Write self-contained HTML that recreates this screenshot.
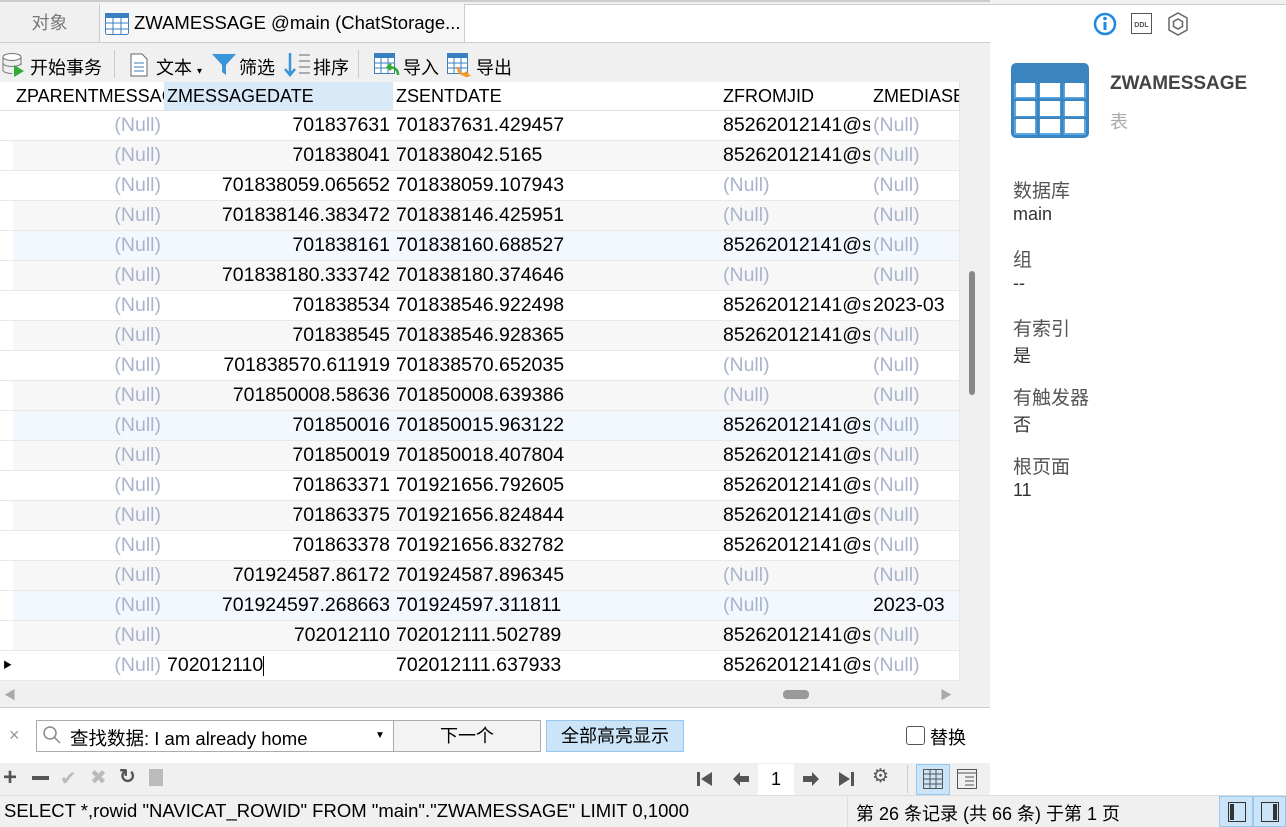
<!DOCTYPE html>
<html><head><meta charset="utf-8"><style>
*{margin:0;padding:0;box-sizing:border-box}
body{width:1286px;height:827px;overflow:hidden;background:#fff;font-family:"Liberation Sans","Noto Sans CJK SC",sans-serif;font-size:18px;color:#000;position:relative}
.a{position:absolute}
.cell{position:absolute;height:30px;line-height:29px;white-space:nowrap;overflow:hidden;border-right:1px solid #e8e8e8;border-bottom:1px solid #e8e8e8;padding:0 3px;font-size:19.5px}
.r{text-align:right}
.n{color:#a9b4cc}
.hd{position:absolute;top:82px;height:29px;line-height:28px;white-space:nowrap;overflow:hidden;border-right:1px solid #e0e0e0;border-bottom:1px solid #e0e0e0;padding:0 3px}
.lbl{position:absolute;left:1013px;font-size:19px;color:#555}
.val{position:absolute;left:1013px;font-size:18px;color:#333}
</style></head><body>
<div class="a" style="left:0;top:0;width:990px;height:44px;background:#f0f0f0;border-top:2px solid #ccc"></div>
<div class="a" style="left:0;top:4px;width:99px;height:38px;line-height:38px;text-align:center;color:#777;background:#f0f0f0">对象</div>
<div class="a" style="left:99px;top:4px;width:366px;height:38px;background:#f6f6f6;border-left:1px solid #ccc;border-right:1px solid #ccc;line-height:38px;padding-left:34px;font-size:18.5px;white-space:nowrap;overflow:hidden">ZWAMESSAGE @main (ChatStorage...</div>
<svg class="a" style="left:105px;top:13px" width="24" height="22"><rect x="0.5" y="0.5" width="23" height="21" rx="2" fill="#fff" stroke="#3a7fc0"/><rect x="0" y="0" width="24" height="5" fill="#3a7fc0"/><path d="M8 5V22M16 5V22M0 10H24M0 16H24" stroke="#3a7fc0"/></svg>
<div class="a" style="left:465px;top:4px;width:525px;height:38px;background:#fff;border-top:1px solid #ccc"></div>
<div class="a" style="left:0;top:42px;width:990px;height:1px;background:#ccc"></div>
<div class="a" style="left:0;top:43px;width:990px;height:39px;background:#f0f0f0"></div>
<svg class="a" style="left:2px;top:52px" width="24" height="26"><ellipse cx="10" cy="5" rx="9" ry="3.5" fill="#fff" stroke="#777"/><path d="M1 5V18c0 2 4 3.5 9 3.5M19 5v8M1 11c0 2 4 3.5 9 3.5s9-1.5 9-3.5" fill="none" stroke="#777"/><path d="M12 13l10 6-10 6z" fill="#3a3"/></svg>
<div class="a" style="left:30px;top:54px">开始事务</div>
<div class="a" style="left:114px;top:50px;width:1px;height:28px;background:#ccc"></div>
<svg class="a" style="left:130px;top:53px" width="18" height="24"><path d="M1 1H12L17 6V23H1Z" fill="#fff" stroke="#666"/><path d="M4 10H14M4 14H14M4 18H14" stroke="#3a7fc0"/></svg>
<div class="a" style="left:156px;top:54px">文本 <span style="font-size:10px">▾</span></div>
<svg class="a" style="left:211px;top:53px" width="26" height="24"><path d="M1 1H25L15 12V22L11 19V12Z" fill="#3a95d8"/></svg>
<div class="a" style="left:239px;top:54px">筛选</div>
<svg class="a" style="left:284px;top:52px" width="28" height="26"><path d="M6 1V22M1 17l5 6 5-6" fill="none" stroke="#3a95d8" stroke-width="2.5"/><path d="M15 3H26M15 9H26M15 15H26M15 21H26" stroke="#666"/></svg>
<div class="a" style="left:313px;top:54px">排序</div>
<div class="a" style="left:358px;top:50px;width:1px;height:28px;background:#ccc"></div>
<svg class="a" style="left:374px;top:53px" width="26" height="24"><rect x="0.5" y="0.5" width="20" height="20" fill="#fff" stroke="#3a7fc0"/><rect x="0" y="0" width="21" height="5" fill="#3a7fc0"/><path d="M7 5V21M14 5V21M0 10H21M0 15H21" stroke="#3a7fc0"/><path d="M24 22c0-6-4-8-10-8l3-3M14 14l3 3" fill="none" stroke="#3a3" stroke-width="2.5"/></svg>
<div class="a" style="left:403px;top:54px">导入</div>
<svg class="a" style="left:447px;top:53px" width="26" height="24"><rect x="0.5" y="0.5" width="20" height="20" fill="#fff" stroke="#3a7fc0"/><rect x="0" y="0" width="21" height="5" fill="#3a7fc0"/><path d="M7 5V21M14 5V21M0 10H21M0 15H21" stroke="#3a7fc0"/><path d="M11 14c0 6 4 8 10 8l-3-3M21 22l-3 3" fill="none" stroke="#f39a1e" stroke-width="2.5"/></svg>
<div class="a" style="left:476px;top:54px">导出</div>
<div class="hd" style="left:0;width:14px;background:#fff"></div>
<div class="hd" style="left:13px;width:152px;background:#fff">ZPARENTMESSAGEID</div>
<div class="hd" style="left:164px;width:230px;background:#d9e9f7">ZMESSAGEDATE</div>
<div class="hd" style="left:393px;width:328px;background:#fff">ZSENTDATE</div>
<div class="hd" style="left:720px;width:151px;background:#fff">ZFROMJID</div>
<div class="hd" style="left:870px;width:90px;background:#fff">ZMEDIASECTIONID</div>
<div id="g"></div>
<div class="a" style="left:960px;top:82px;width:30px;height:599px;background:#f0f0f0"></div>
<div class="a" style="left:969px;top:271px;width:6px;height:124px;border-radius:3px;background:#888"></div>
<div class="a" style="left:0;top:681px;width:990px;height:27px;background:#f0f0f0;border-bottom:1px solid #ccc"></div>
<div class="a" style="left:4px;top:686px;font-size:12px;color:#aaa">◀</div>
<div class="a" style="left:940px;top:686px;font-size:12px;color:#aaa">▶</div>
<div class="a" style="left:783px;top:690px;width:26px;height:9px;border-radius:4px;background:#999"></div>
<div class="a" style="left:0;top:708px;width:990px;height:55px;background:#fff"></div>
<div class="a" style="left:9px;top:725px;color:#999;font-size:18px">×</div>
<div class="a" style="left:36px;top:720px;width:505px;height:32px;border:1px solid #aaa;background:#fff"></div>
<svg class="a" style="left:42px;top:725px" width="20" height="20"><circle cx="8" cy="8" r="6" fill="none" stroke="#888" stroke-width="1.5"/><path d="M12 12l6 6" stroke="#888" stroke-width="1.5"/></svg>
<div class="a" style="left:70px;top:725px;font-size:18.5px">查找数据: I am already home</div>
<div class="a" style="left:375px;top:730px;font-size:10px">▼</div>
<div class="a" style="left:393px;top:721px;width:147px;height:30px;background:#f3f3f3;border-left:1px solid #aaa;text-align:center;line-height:30px">下一个</div>
<div class="a" style="left:546px;top:720px;width:138px;height:32px;background:#cce4f7;border:1px solid #99c6ec;text-align:center;line-height:30px">全部高亮显示</div>
<div class="a" style="left:906px;top:726px;width:19px;height:19px;border:1px solid #555;border-radius:3px"></div>
<div class="a" style="left:930px;top:724px">替换</div>
<div class="a" style="left:0;top:763px;width:990px;height:32px;background:#f0f0f0"></div>
<div class="a" style="left:3px;top:764px;font-size:24px;font-weight:bold;color:#555;line-height:28px">+</div>
<div class="a" style="left:32px;top:776px;width:17px;height:4px;background:#555"></div>
<div class="a" style="left:60px;top:766px;color:#bbb;font-size:20px">✔</div>
<div class="a" style="left:90px;top:765px;color:#bbb;font-size:20px">✖</div>
<div class="a" style="left:119px;top:764px;color:#555;font-size:20px;font-weight:bold">↻</div>
<div class="a" style="left:149px;top:769px;width:14px;height:17px;background:#bbb"></div>
<svg class="a" style="left:696px;top:771px" width="18" height="16"><rect x="1" y="1" width="3" height="14" fill="#555"/><path d="M5 8L16 1V15Z" fill="#555"/></svg>
<svg class="a" style="left:732px;top:771px" width="18" height="16"><path d="M1 8L8 1V5H17V11H8V15Z" fill="#555"/></svg>
<div class="a" style="left:758px;top:764px;width:36px;height:31px;background:#fff;text-align:center;line-height:31px">1</div>
<svg class="a" style="left:802px;top:771px" width="18" height="16"><path d="M17 8L10 1V5H1V11H10V15Z" fill="#555"/></svg>
<svg class="a" style="left:837px;top:771px" width="18" height="16"><path d="M13 8L2 1V15Z" fill="#555"/><rect x="14" y="1" width="3" height="14" fill="#555"/></svg>
<div class="a" style="left:872px;top:765px;color:#555;font-size:19px">⚙</div>
<div class="a" style="left:907px;top:765px;width:1px;height:28px;background:#ccc"></div>
<div class="a" style="left:916px;top:764px;width:34px;height:31px;background:#cce4f7;border:1px solid #99c6ec"></div>
<svg class="a" style="left:923px;top:769px" width="20" height="20"><rect x="0.5" y="0.5" width="19" height="19" fill="none" stroke="#555"/><path d="M7 0V20M13 0V20M0 5H20M0 10H20M0 15H20" stroke="#555"/></svg>
<svg class="a" style="left:957px;top:769px" width="20" height="20"><rect x="0.5" y="0.5" width="19" height="19" fill="none" stroke="#555"/><path d="M0 4H20M8 8H17M8 12H17M8 16H17" stroke="#555"/></svg>
<div class="a" style="left:0;top:795px;width:1286px;height:32px;background:#f0f0f0;border-top:1px solid #ddd"></div>
<div class="a" style="left:4px;top:800px;font-size:18.5px">SELECT *,rowid "NAVICAT_ROWID" FROM "main"."ZWAMESSAGE" LIMIT 0,1000</div>
<div class="a" style="top:797px;width:1px;height:30px;background:#ddd;left:847px"></div>
<div class="a" style="left:856px;top:800px">第 26 条记录 (共 66 条) 于第 1 页</div>
<div class="a" style="left:1219px;top:796px;width:34px;height:31px;background:#cce4f7;border:1px solid #99c6ec"></div>
<div class="a" style="left:1253px;top:796px;width:33px;height:31px;background:#cce4f7;border:1px solid #99c6ec"></div>
<svg class="a" style="left:1228px;top:802px" width="18" height="20"><rect x="0.5" y="0.5" width="17" height="19" fill="none" stroke="#333"/><rect x="2" y="2" width="4" height="16" fill="#333"/></svg>
<svg class="a" style="left:1261px;top:802px" width="18" height="20"><rect x="0.5" y="0.5" width="17" height="19" fill="none" stroke="#333"/><rect x="12" y="2" width="4" height="16" fill="#333"/></svg>
<div class="a" style="left:990px;top:0;width:296px;height:5px;border-bottom:1px solid #ccc;background:#f0f0f0"></div>
<svg class="a" style="left:1093px;top:12px" width="24" height="24"><circle cx="12" cy="12" r="10" fill="none" stroke="#1e88e5" stroke-width="2.5"/><rect x="10.5" y="10" width="3" height="8" fill="#1e88e5"/><circle cx="12" cy="6.5" r="1.8" fill="#1e88e5"/></svg>
<svg class="a" style="left:1131px;top:13px" width="22" height="22"><rect x="0.5" y="0.5" width="20" height="20" fill="none" stroke="#555"/><text x="10.5" y="14" font-size="7" font-weight="bold" text-anchor="middle" fill="#555" font-family="Liberation Sans">DDL</text></svg>
<svg class="a" style="left:1167px;top:12px" width="22" height="24"><path d="M11 1L20 6V18L11 23L2 18V6Z" fill="none" stroke="#666" stroke-width="1.5"/><path d="M11 7L15.5 9.5V14.5L11 17L6.5 14.5V9.5Z" fill="none" stroke="#666" stroke-width="1.5"/></svg>
<svg class="a" style="left:1011px;top:63px" width="78" height="75"><rect x="0" y="0" width="78" height="75" rx="5" fill="#3a85c0"/><rect x="3" y="20" width="72" height="52" fill="#5aa8e4"/><path d="M27 20V72M51 20V72M3 37H75M3 55H75" stroke="#3a85c0" stroke-width="3"/><path d="M3 20H75" stroke="#3a85c0" stroke-width="2"/></svg>
<svg class="a" style="left:1011px;top:80px" width="78" height="58"><rect x="5" y="3" width="19" height="14" fill="#fff"/><rect x="29" y="3" width="20" height="14" fill="#fff"/><rect x="54" y="3" width="19" height="14" fill="#fff"/><rect x="5" y="21" width="19" height="15" fill="#fff"/><rect x="29" y="21" width="20" height="15" fill="#fff"/><rect x="54" y="21" width="19" height="15" fill="#fff"/><rect x="5" y="39" width="19" height="14" fill="#fff"/><rect x="29" y="39" width="20" height="14" fill="#fff"/><rect x="54" y="39" width="19" height="14" fill="#fff"/></svg>
<div class="a" style="left:1110px;top:73px;font-weight:bold;color:#444;font-size:19px">ZWAMESSAGE</div>
<div class="a" style="left:1110px;top:108px;color:#aaa;font-size:18px">表</div>
<div class="lbl" style="top:176px">数据库</div><div class="val" style="top:204px">main</div>
<div class="lbl" style="top:245px">组</div><div class="val" style="top:273px">--</div>
<div class="lbl" style="top:314px">有索引</div><div class="val" style="top:342px">是</div>
<div class="lbl" style="top:383px">有触发器</div><div class="val" style="top:411px">否</div>
<div class="lbl" style="top:452px">根页面</div><div class="val" style="top:480px">11</div>
<script>
var d=[["701837631","701837631.429457","85262012141@s",""],
["701838041","701838042.5165","85262012141@s",""],
["701838059.065652","701838059.107943","",""],
["701838146.383472","701838146.425951","",""],
["701838161","701838160.688527","85262012141@s",""],
["701838180.333742","701838180.374646","",""],
["701838534","701838546.922498","85262012141@s","2023-03"],
["701838545","701838546.928365","85262012141@s",""],
["701838570.611919","701838570.652035","",""],
["701850008.58636","701850008.639386","",""],
["701850016","701850015.963122","85262012141@s",""],
["701850019","701850018.407804","85262012141@s",""],
["701863371","701921656.792605","85262012141@s",""],
["701863375","701921656.824844","85262012141@s",""],
["701863378","701921656.832782","85262012141@s",""],
["701924587.86172","701924587.896345","",""],
["701924597.268663","701924597.311811","","2023-03"],
["702012110","702012111.502789","85262012141@s",""],
["702012110","702012111.637933","85262012141@s",""]];
var h="";
d.forEach(function(r,i){var y=111+i*30;var bg=(i%2==1)?"#f7f7f7":"#fff";if(i==4||i==10||i==16)bg="#f2f8fd";
h+='<div class="cell" style="left:0;top:'+y+'px;width:14px;background:#fff">'+(i==18?'<span style="font-size:9px;position:absolute;left:3px">▶</span>':'')+'</div>';
h+='<div class="cell r n" style="left:13px;top:'+y+'px;width:152px;background:'+bg+'">(Null)</div>';
if(i==18){h+='<div class="cell" style="left:164px;top:'+y+'px;width:230px;background:#fff">'+r[0]+'<span style="display:inline-block;width:1px;height:20px;background:#000;vertical-align:middle"></span></div>';}
else h+='<div class="cell r" style="left:164px;top:'+y+'px;width:230px;background:'+bg+'">'+r[0]+'</div>';
h+='<div class="cell" style="left:393px;top:'+y+'px;width:328px;background:'+bg+'">'+r[1]+'</div>';
h+='<div class="cell'+(r[2]?'':' n')+'" style="left:720px;top:'+y+'px;width:151px;background:'+bg+'">'+(r[2]||'(Null)')+'</div>';
h+='<div class="cell'+(r[3]?'':' n')+'" style="left:870px;top:'+y+'px;width:90px;background:'+bg+'">'+(r[3]||'(Null)')+'</div>';});
document.getElementById("g").innerHTML=h;
</script>
</body></html>
